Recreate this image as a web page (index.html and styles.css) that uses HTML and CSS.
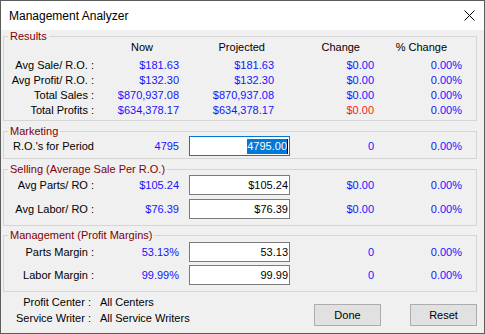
FILE: index.html
```html
<!DOCTYPE html>
<html lang="en">
<head>
    <meta charset="UTF-8">
    <title>Management Analyzer</title>
    <link rel="stylesheet" href="styles.css">
</head>
<body>
    <div class="window">
        <div class="titlebar">
            <span class="title">Management Analyzer</span>
            <svg class="close" width="11" height="11" viewBox="0 0 11 11">
                <path d="M0.5 0.5 L10.5 10.5 M10.5 0.5 L0.5 10.5" stroke="#000" stroke-width="1" fill="none"/>
            </svg>
        </div>

        <div class="client">
            <fieldset class="group results">
                <legend>Results</legend>
                <div class="grid head">
                    <span></span>
                    <span class="h-now">Now</span>
                    <span class="h-proj">Projected</span>
                    <span class="h-chg">Change</span>
                    <span class="h-pct">% Change</span>
                </div>
                <div class="grid rows">
                    <span class="label">Avg Sale/ R.O. :</span>
                    <span class="val">$181.63</span>
                    <span class="val proj">$181.63</span>
                    <span class="val">$0.00</span>
                    <span class="val">0.00%</span>

                    <span class="label">Avg Profit/ R.O. :</span>
                    <span class="val">$132.30</span>
                    <span class="val proj">$132.30</span>
                    <span class="val">$0.00</span>
                    <span class="val">0.00%</span>

                    <span class="label">Total Sales :</span>
                    <span class="val">$870,937.08</span>
                    <span class="val proj">$870,937.08</span>
                    <span class="val">$0.00</span>
                    <span class="val">0.00%</span>

                    <span class="label">Total Profits :</span>
                    <span class="val">$634,378.17</span>
                    <span class="val proj">$634,378.17</span>
                    <span class="val red">$0.00</span>
                    <span class="val">0.00%</span>
                </div>
            </fieldset>

            <fieldset class="group marketing">
                <legend>Marketing</legend>
                <div class="grid inputs">
                    <span class="label">R.O.'s for Period</span>
                    <span class="val">4795</span>
                    <div class="textbox focused"><span class="sel">4795.00</span><span class="caret"></span></div>
                    <span class="val">0</span>
                    <span class="val">0.00%</span>
                </div>
            </fieldset>

            <fieldset class="group selling">
                <legend>Selling (Average Sale Per R.O.)</legend>
                <div class="grid inputs">
                    <span class="label">Avg Parts/ RO :</span>
                    <span class="val">$105.24</span>
                    <div class="textbox">$105.24</div>
                    <span class="val">$0.00</span>
                    <span class="val">0.00%</span>

                    <span class="label">Avg Labor/ RO :</span>
                    <span class="val">$76.39</span>
                    <div class="textbox">$76.39</div>
                    <span class="val">$0.00</span>
                    <span class="val">0.00%</span>
                </div>
            </fieldset>

            <fieldset class="group management">
                <legend>Management (Profit Margins)</legend>
                <div class="grid inputs">
                    <span class="label">Parts Margin :</span>
                    <span class="val">53.13%</span>
                    <div class="textbox">53.13</div>
                    <span class="val">0</span>
                    <span class="val">0.00%</span>

                    <span class="label">Labor Margin :</span>
                    <span class="val">99.99%</span>
                    <div class="textbox">99.99</div>
                    <span class="val">0</span>
                    <span class="val">0.00%</span>
                </div>
            </fieldset>

            <div class="footer">
                <div class="info">
                    <span class="info-label">Profit Center :</span>
                    <span>All Centers</span>
                    <span class="info-label">Service Writer :</span>
                    <span>All Service Writers</span>
                </div>
                <div class="buttons">
                    <button class="btn">Done</button>
                    <button class="btn">Reset</button>
                </div>
            </div>
        </div>
    </div>
</body>
</html>
```

FILE: styles.css
```css
body {
    margin: 0;
    background-color: #f0f0f0;
    font-family: "Liberation Sans", Arial, sans-serif;
    font-size: 11px;
    color: #000;
}
.window {
    width: 485px;
    height: 334px;
    box-sizing: border-box;
    border: 1px solid #5c5c5c;
    background-color: #f0f0f0;
    display: flex;
    flex-direction: column;
    overflow: hidden;
}
.titlebar {
    height: 29px;
    background-color: #fff;
    display: flex;
    align-items: center;
    justify-content: space-between;
    padding: 0 9px 0 8px;
    flex-shrink: 0;
}
.title {
    font-size: 12px;
}
.close {
    display: block;
}
.client {
    flex: 1;
    display: flex;
    flex-direction: column;
}

/* group boxes */
.group {
    margin: 0 7px 0 2px;
    padding: 0;
    border: 1px solid #d5d5d5;
    min-width: 0;
}
.group legend {
    color: #800000;
    line-height: 12px;
    padding: 0 2px;
    margin-left: 4px;
}
.results {
    padding-bottom: 2px;
}
.marketing {
    margin-top: 4px;
    padding-bottom: 2px;
}
.selling {
    margin-top: 4px;
    padding-bottom: 6px;
}
.management {
    margin-top: 3px;
    padding-bottom: 6px;
}

/* columns */
.grid {
    display: grid;
    grid-template-columns: 90px 85px 111px 84px 88px;
}
.head {
    line-height: 11px;
    text-align: right;
}
.h-now { padding-right: 26px; }
.h-proj { padding-right: 25px; }
.h-chg { padding-right: 14px; }
.h-pct { padding-right: 15px; }
.rows {
    margin-top: 5px;
    grid-auto-rows: 15px;
    line-height: 15px;
}
.inputs {
    grid-auto-rows: 20px;
    line-height: 20px;
    row-gap: 4px;
}
.marketing .inputs {
    margin-top: -1px;
}
.management .inputs {
    margin-top: 1px;
    row-gap: 3px;
}
.label {
    text-align: right;
    white-space: nowrap;
}
.val {
    text-align: right;
    color: #1515ff;
    white-space: nowrap;
}
.val.proj {
    padding-right: 16px;
}
.val.red {
    color: #ff1a1a;
}

/* text boxes */
.textbox {
    margin-left: 10px;
    width: 101px;
    height: 20px;
    box-sizing: border-box;
    border: 1px solid #7a7a7a;
    background-color: #fff;
    padding-right: 1px;
    display: flex;
    align-items: center;
    justify-content: flex-end;
    line-height: 18px;
}
.textbox.focused {
    border-color: #0078d7;
}
.sel {
    background-color: #0078d7;
    color: #fff;
    line-height: 15px;
}
.caret {
    width: 1px;
    height: 15px;
    background-color: #000;
}

/* bottom */
.footer {
    display: flex;
    padding-top: 2px;
}
.info {
    display: grid;
    grid-template-columns: 90px auto;
    column-gap: 9px;
    grid-auto-rows: 16px;
    line-height: 16px;
    white-space: nowrap;
}
.info-label {
    text-align: right;
}
.buttons {
    margin-left: auto;
    margin-right: 7px;
    margin-top: 10px;
    display: flex;
    gap: 29px;
}
.btn {
    width: 67px;
    height: 22px;
    padding: 0;
    background-color: #e1e1e1;
    border: 1px solid #adadad;
    font-family: "Liberation Sans", Arial, sans-serif;
    font-size: 11px;
    color: #000;
}
```
